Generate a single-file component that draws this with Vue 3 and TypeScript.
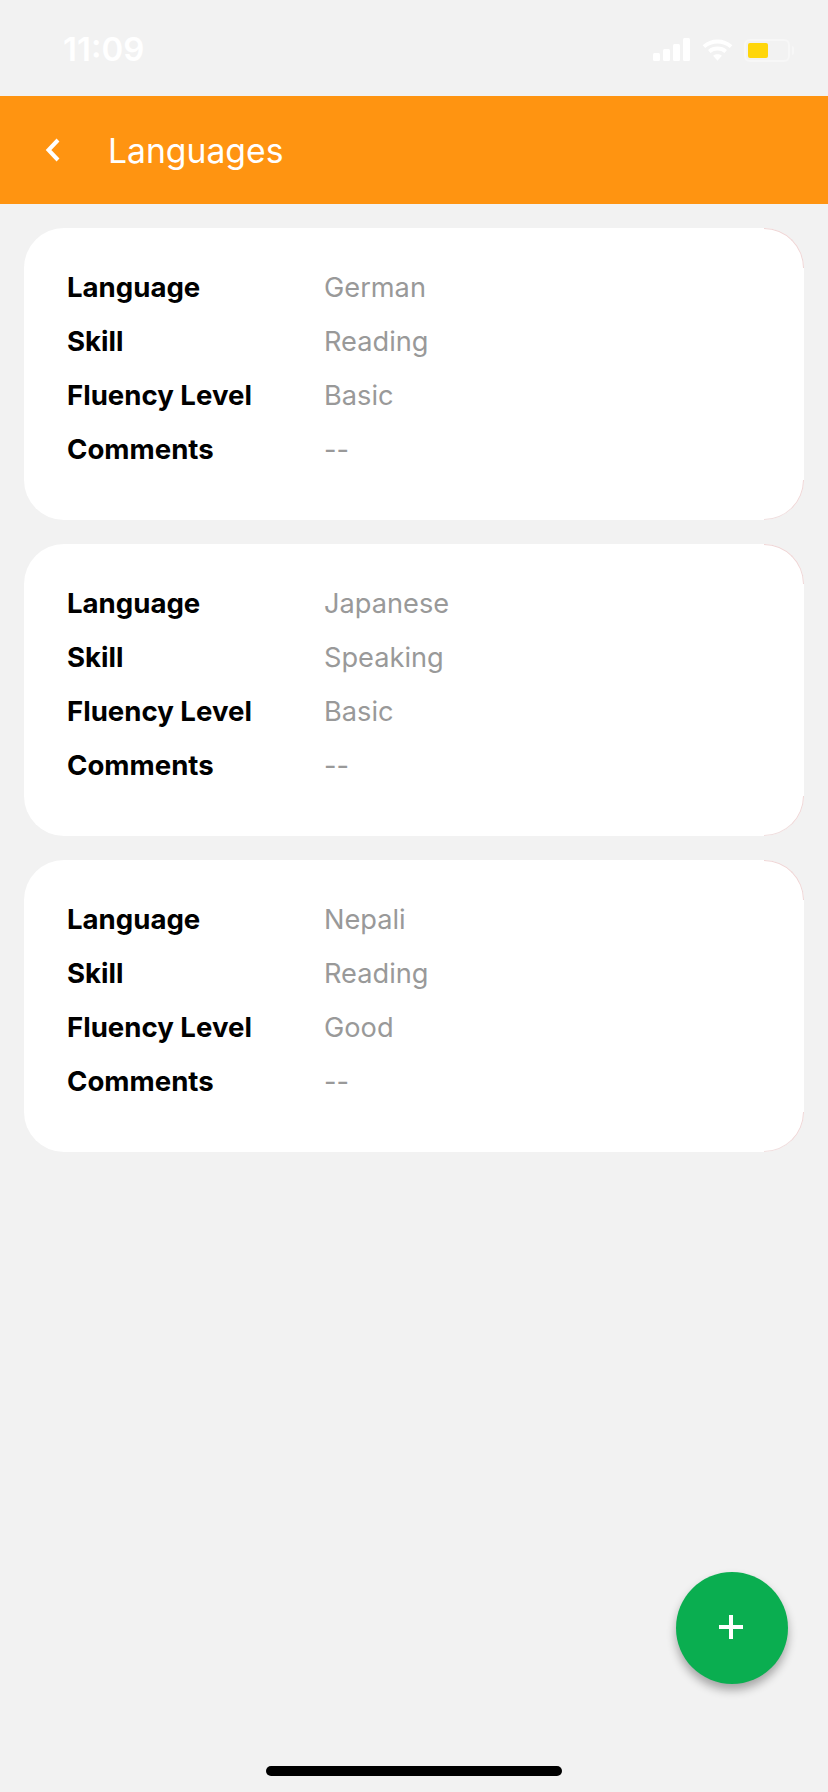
<script setup lang="ts">
interface LanguageEntry {
  language: string;
  skill: string;
  fluency: string;
  comments: string;
}

const entries: LanguageEntry[] = [
  { language: "German", skill: "Reading", fluency: "Basic", comments: "--" },
  { language: "Japanese", skill: "Speaking", fluency: "Basic", comments: "--" },
  { language: "Nepali", skill: "Reading", fluency: "Good", comments: "--" },
];

function rows(entry: LanguageEntry) {
  return [
    { label: "Language", value: entry.language },
    { label: "Skill", value: entry.skill },
    { label: "Fluency Level", value: entry.fluency },
    { label: "Comments", value: entry.comments },
  ];
}
</script>

<template>
  <div class="screen">
    <div class="status">
      <span class="time">11:09</span>
      <div class="status-icons">
        <svg width="38" height="24" viewBox="0 0 38 24">
          <rect x="0" y="15" width="7" height="8" rx="1.5" />
          <rect x="10" y="11" width="7" height="12" rx="1.5" />
          <rect x="20" y="6" width="7" height="17" rx="1.5" />
          <rect x="30" y="0" width="7" height="23" rx="1.5" />
        </svg>
        <svg class="wifi" width="31" height="24" viewBox="0 0 32 24">
          <path d="M2 8.5C10 1.5 22 1.5 30 8.5" />
          <path d="M7.5 13.5C12.5 9.5 19.5 9.5 24.5 13.5" />
          <path class="wifi-dot" d="M16 23 11.5 18C14 16 18 16 20.5 18Z" />
        </svg>
        <div class="battery">
          <div class="battery-body"><div class="battery-fill"></div></div>
          <div class="battery-cap"></div>
        </div>
      </div>
    </div>

    <header class="topbar">
      <svg class="back" width="18" height="26" viewBox="0 0 18 26">
        <path d="M14 3 4.5 13 14 23" />
      </svg>
      <h1>Languages</h1>
    </header>

    <main class="list">
      <section v-for="entry in entries" :key="entry.language" class="card">
        <div v-for="row in rows(entry)" :key="row.label" class="row">
          <span class="label">{{ row.label }}</span>
          <span class="value">{{ row.value }}</span>
        </div>
      </section>
    </main>

    <button class="fab" type="button" aria-label="Add language">
      <svg width="26" height="26" viewBox="0 0 26 26">
        <path d="M13 1v24M1 13h24" />
      </svg>
    </button>

    <div class="home-bar"></div>
  </div>
</template>

<style>
html,
body {
  margin: 0;
  background: #f2f2f2;
}
</style>

<style scoped>
.screen {
  position: relative;
  width: 828px;
  height: 1792px;
  overflow: hidden;
  background: #f2f2f2;
  font-family: Inter, "Liberation Sans", sans-serif;
}

.status {
  height: 96px;
  box-sizing: border-box;
  padding: 30px 34px 0 63px;
  display: flex;
  justify-content: space-between;
  align-items: flex-start;
}

.time {
  color: #ffffff;
  font-size: 33px;
  font-weight: 600;
  line-height: 38px;
}

.status-icons {
  display: flex;
  align-items: center;
  gap: 11px;
  padding-top: 8px;
}

.status-icons svg {
  fill: #ffffff;
  display: block;
}

.wifi path {
  fill: none;
  stroke: #ffffff;
  stroke-width: 4;
}

.wifi .wifi-dot {
  fill: #ffffff;
  stroke: none;
}

.battery {
  display: flex;
  align-items: center;
  gap: 2px;
}

.battery-body {
  width: 46px;
  height: 23px;
  box-sizing: border-box;
  border: 2px solid #f7f7f7;
  border-radius: 6px;
  padding: 2px;
}

.battery-fill {
  width: 20px;
  height: 100%;
  background: #ffd60a;
  border-radius: 2px;
}

.battery-cap {
  width: 2px;
  height: 9px;
  background: #f7f7f7;
  border-radius: 0 2px 2px 0;
}

.topbar {
  height: 108px;
  background: #ff9411;
  display: flex;
  align-items: center;
  padding-left: 44px;
}

.back {
  display: block;
}

.back path {
  fill: none;
  stroke: #ffffff;
  stroke-width: 4;
}

.topbar h1 {
  margin: 0 0 0 46px;
  color: #ffffff;
  font-size: 33.7px;
  font-weight: 400;
  line-height: 40px;
  padding-top: 2px;
}

.list {
  display: flex;
  flex-direction: column;
  gap: 24px;
  padding: 24px 24px 0;
}

.card {
  position: relative;
  height: 292px;
  box-sizing: border-box;
  padding: 32px 43px 0;
  background: #ffffff;
  border-radius: 40px;
}

.card::before,
.card::after {
  content: "";
  position: absolute;
  right: 0;
  width: 40px;
  height: 40px;
  box-sizing: border-box;
  border-right: 1px solid #efd6d6;
}

.card::before {
  top: 0;
  border-top: 1px solid #efd6d6;
  border-top-right-radius: 40px;
}

.card::after {
  bottom: 0;
  border-bottom: 1px solid #f0dfdf;
  border-bottom-right-radius: 40px;
}

.row {
  display: flex;
  height: 54px;
  align-items: baseline;
  line-height: 54px;
}

.label {
  width: 257px;
  color: #000000;
  font-size: 27.6px;
  font-weight: 700;
}

.value {
  color: #999999;
  font-size: 27.2px;
  font-weight: 400;
}

.fab {
  position: absolute;
  left: 676px;
  top: 1572px;
  width: 112px;
  height: 112px;
  padding: 0;
  border: none;
  border-radius: 50%;
  background: #0aae50;
  box-shadow: 0 6px 10px rgba(0, 0, 0, 0.32);
  display: flex;
  align-items: center;
  justify-content: center;
}

.fab svg {
  display: block;
  margin: 0 3px 3px 0;
}

.fab path {
  fill: none;
  stroke: #ffffff;
  stroke-width: 4;
}

.home-bar {
  position: absolute;
  left: 266px;
  top: 1766px;
  width: 296px;
  height: 10px;
  border-radius: 5px;
  background: #000000;
}
</style>
